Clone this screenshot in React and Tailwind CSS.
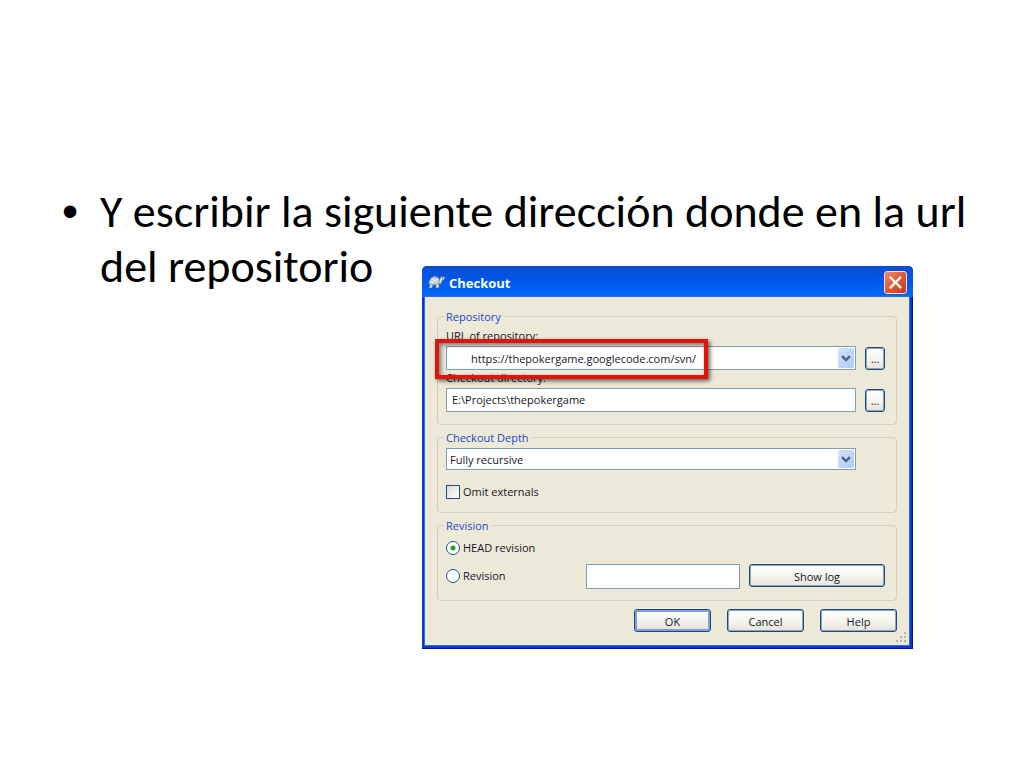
import React, { useState } from "react";

const TurtleIcon = () => (
  <svg viewBox="0 0 17 16" className="h-4 w-[17px] shrink-0" aria-hidden="true">
    <path d="M1 9.5 C1.2 5.2 4 2.6 7 2.6 C9.8 2.6 11.8 5.2 12 8.8 L9 10.8 L3.4 11 Z" fill="#b9c7d9" stroke="#7f93b3" strokeWidth="0.6" />
    <path d="M3 6.2 L5.4 4.6 L7.6 6 L10.4 5.2 M4.4 9.8 L5 7.6 L7.6 6 L8.8 9.6 M1.4 8.4 L5 7.6" stroke="#f2f6fb" strokeWidth="0.9" fill="none" />
    <path d="M10.8 9 L12.2 4.6 C12.6 2.8 14.6 2.4 16.6 3.4 C16.6 5.2 15.4 6 14.2 6.2 L12.6 10 Z" fill="#e9e5d2" stroke="#8a8f8a" strokeWidth="0.5" />
    <path d="M0.6 9.4 L3.4 10 L5 10.8 L3.8 14 H1 L2.2 10.8 Z M8 10.6 L8 14 H10.6 L11.2 9.8 Z" fill="#e2decb" stroke="#707a82" strokeWidth="0.5" />
    <circle cx="14.4" cy="4.2" r="0.6" fill="#1f2937" />
  </svg>
);

const CloseIcon = () => (
  <svg viewBox="0 0 22 22" className="h-full w-full" aria-hidden="true">
    <path d="M6 6 L16 16 M16 6 L6 16" stroke="#fff" strokeWidth="2.4" strokeLinecap="square" />
  </svg>
);

const DropArrow = () => (
  <span className="pointer-events-none absolute top-0.5 right-0.5 bottom-0.5 flex w-4 items-center justify-center rounded-xs bg-gradient-to-br from-[#d6e2fd] to-[#b3c8f7]">
    <svg viewBox="0 0 10 7" className="h-[7px] w-2.5" aria-hidden="true">
      <path d="M1 1.2 L5 5 L9 1.2" fill="none" stroke="#4d6185" strokeWidth="2.4" />
    </svg>
  </span>
);

const ResizeGrip = () => (
  <svg viewBox="0 0 12 12" className="absolute right-0.5 bottom-0.5 h-3 w-3" aria-hidden="true">
    <path
      d="M9 1h2v2h-2z M5 5h2v2h-2z M9 5h2v2h-2z M1 9h2v2h-2z M5 9h2v2h-2z M9 9h2v2h-2z"
      fill="#b8b4a2"
    />
  </svg>
);

const buttonStyle =
  "rounded-[3px] border border-[#1c4a7c] ring-1 ring-inset ring-[#8fa5b8] bg-gradient-to-b from-white via-[#f6f5f0] to-[#e6e3d8] pt-0.5 text-center text-[#16162a]";
const fieldStyle = "w-full border border-[#7f9db9] bg-white text-[#16162a] outline-none";

const Group = ({ title, children }) => (
  <fieldset className="min-w-0 rounded-[4px] border border-[#d0d0bf] px-1.5">
    <legend className="h-4 px-0.5 pt-px text-[#1f45cc]">{title}</legend>
    <div className="pr-[5px] pl-0.5">{children}</div>
  </fieldset>
);

const CheckoutDialog = () => {
  const [directory, setDirectory] = useState("E:\\Projects\\thepokergame");
  const [omitExternals, setOmitExternals] = useState(false);
  const [revision, setRevision] = useState("head");
  const [revisionNumber, setRevisionNumber] = useState("");

  return (
    <section
      aria-label="Checkout"
      className="relative w-full max-w-[491px] rounded-t-[5px] bg-[#0838d4] pr-1 pb-1 pl-[3px] font-['Open_Sans',sans-serif] text-[11px] leading-4 text-[#16162a] shadow-[inset_-1px_-1px_0_#001590]"
    >
      {/* Title bar */}
      <header className="-mr-1 -ml-[3px] flex h-[31px] items-center rounded-t-[5px] bg-gradient-to-b from-[#0a4ed0] via-[#0058ee] to-[#0567fb] pr-1.5 pl-1.5">
        <TurtleIcon />
        <h2 className="ml-1 flex-1 pt-0.5 text-[13px] leading-5 font-bold text-white">
          Checkout
        </h2>
        <button
          type="button"
          aria-label="Close"
          className="mt-0.5 h-[23px] w-[23px] rounded-[3px] border border-[#f3ded8] bg-gradient-to-br from-[#ee8b6b] via-[#df5a34] to-[#c23a14]"
        >
          <CloseIcon />
        </button>
      </header>

      <form
        className="relative bg-[#ece9d8] px-3 pt-[11px] pb-[13px] shadow-[0_0_0_1px_#2e6ff0]"
        onSubmit={(e) => e.preventDefault()}
      >
        <div className="flex flex-col gap-1">
          <Group title="Repository">
            <div className="pt-1 pb-3">
              <label htmlFor="url" className="mb-0.5 block">URL of repository:</label>
              <div className="relative flex items-center gap-[9px]">
                <div className="relative flex-1">
                  <select id="url" className={`${fieldStyle} block h-6 appearance-none pt-0.5 pl-6`}>
                    <option>https://thepokergame.googlecode.com/svn/</option>
                  </select>
                  <DropArrow />
                </div>
                <button type="button" aria-label="Browse repository" className={`${buttonStyle} h-[23px] w-5`}>
                  ...
                </button>
                {/* Highlight around the url */}
                <div className="pointer-events-none absolute -top-[7px] -left-[11px] z-20 h-10 w-[273px] border-4 border-[#e3120b] shadow-[2px_2px_4px_rgba(0,0,0,0.6),inset_2px_2px_4px_rgba(0,0,0,0.5)]" />
              </div>
              <label htmlFor="directory" className="mb-0.5 block">Checkout directory:</label>
              <div className="flex items-center gap-[9px]">
                <div className="flex-1">
                  <input
                    id="directory"
                    type="text"
                    value={directory}
                    onChange={(e) => setDirectory(e.target.value)}
                    className={`${fieldStyle} block h-6 px-[5px] pb-0.5`}
                  />
                </div>
                <button type="button" aria-label="Browse directory" className={`${buttonStyle} h-[23px] w-5`}>
                  ...
                </button>
              </div>
            </div>
          </Group>

          <Group title="Checkout Depth">
            <div className="pt-[3px] pb-3">
              <div className="relative mr-[29px]">
                <select aria-label="Checkout Depth" className={`${fieldStyle} block h-[22px] appearance-none pt-0.5 pl-[3px]`}>
                  <option>Fully recursive</option>
                </select>
                <DropArrow />
              </div>
              <label className="mt-3.5 flex h-4 items-center gap-[3px]">
                <input
                  type="checkbox"
                  checked={omitExternals}
                  onChange={(e) => setOmitExternals(e.target.checked)}
                  className="h-3.5 w-3.5 appearance-none border border-[#1c5180] bg-gradient-to-br from-[#dcdcd7] to-white checked:bg-[#21a121]"
                />
                Omit externals
              </label>
            </div>
          </Group>

          <Group title="Revision">
            <div className="pt-[7px] pb-[11px]">
              <label className="flex h-4 items-center gap-[3px]">
                <input
                  type="radio"
                  name="revision"
                  checked={revision === "head"}
                  onChange={() => setRevision("head")}
                  className="h-3.5 w-3.5 appearance-none rounded-full border border-[#1c5180] bg-white checked:bg-[radial-gradient(circle,#21a121_0_2px,#fff_3px)]"
                />
                HEAD revision
              </label>
              <div className="mt-2 flex items-start">
                <label className="mt-1 flex h-4 flex-1 items-center gap-[3px]">
                  <input
                    type="radio"
                    name="revision"
                    checked={revision === "number"}
                    onChange={() => setRevision("number")}
                    className="h-3.5 w-3.5 appearance-none rounded-full border border-[#1c5180] bg-white checked:bg-[radial-gradient(circle,#21a121_0_2px,#fff_3px)]"
                  />
                  Revision
                </label>
                <input
                  type="text"
                  aria-label="Revision number"
                  value={revisionNumber}
                  onChange={(e) => setRevisionNumber(e.target.value)}
                  className="h-[25px] w-[154px] border border-[#7f9db9] bg-white px-1 outline-none"
                />
                <button type="button" className={`${buttonStyle} ml-[9px] h-[23px] w-[136px]`}>
                  Show log
                </button>
              </div>
            </div>
          </Group>
        </div>

        <div className="mt-2 flex justify-end gap-4">
          <button
            type="submit"
            className="h-[23px] w-[77px] rounded-[3px] border border-[#1c4a7c] bg-gradient-to-b from-white to-[#e6e3d8] pt-0.5 text-[#16162a] ring-2 ring-inset ring-[#7d9fe0]"
          >
            OK
          </button>
          <button type="button" className={`${buttonStyle} h-[23px] w-[77px]`}>Cancel</button>
          <button type="button" className={`${buttonStyle} h-[23px] w-[77px]`}>Help</button>
        </div>
        <ResizeGrip />
      </form>
    </section>
  );
};

const App = () => {
  return (
    <main className="min-h-screen bg-white pt-[184px] pb-10">
      <ul className="pr-10 pl-[100px] font-[Carlito,Lato,sans-serif] text-[46px] leading-[55px] text-black">
        <li className="relative">
          <span className="absolute top-0 -left-[38px] font-['Liberation_Sans',sans-serif]" aria-hidden="true">•</span>
          Y escribir la siguiente dirección donde en la url del repositorio
        </li>
      </ul>
      <div className="-mt-7 mr-[111px] flex justify-end">
        <CheckoutDialog />
      </div>
    </main>
  );
};

export default App;
